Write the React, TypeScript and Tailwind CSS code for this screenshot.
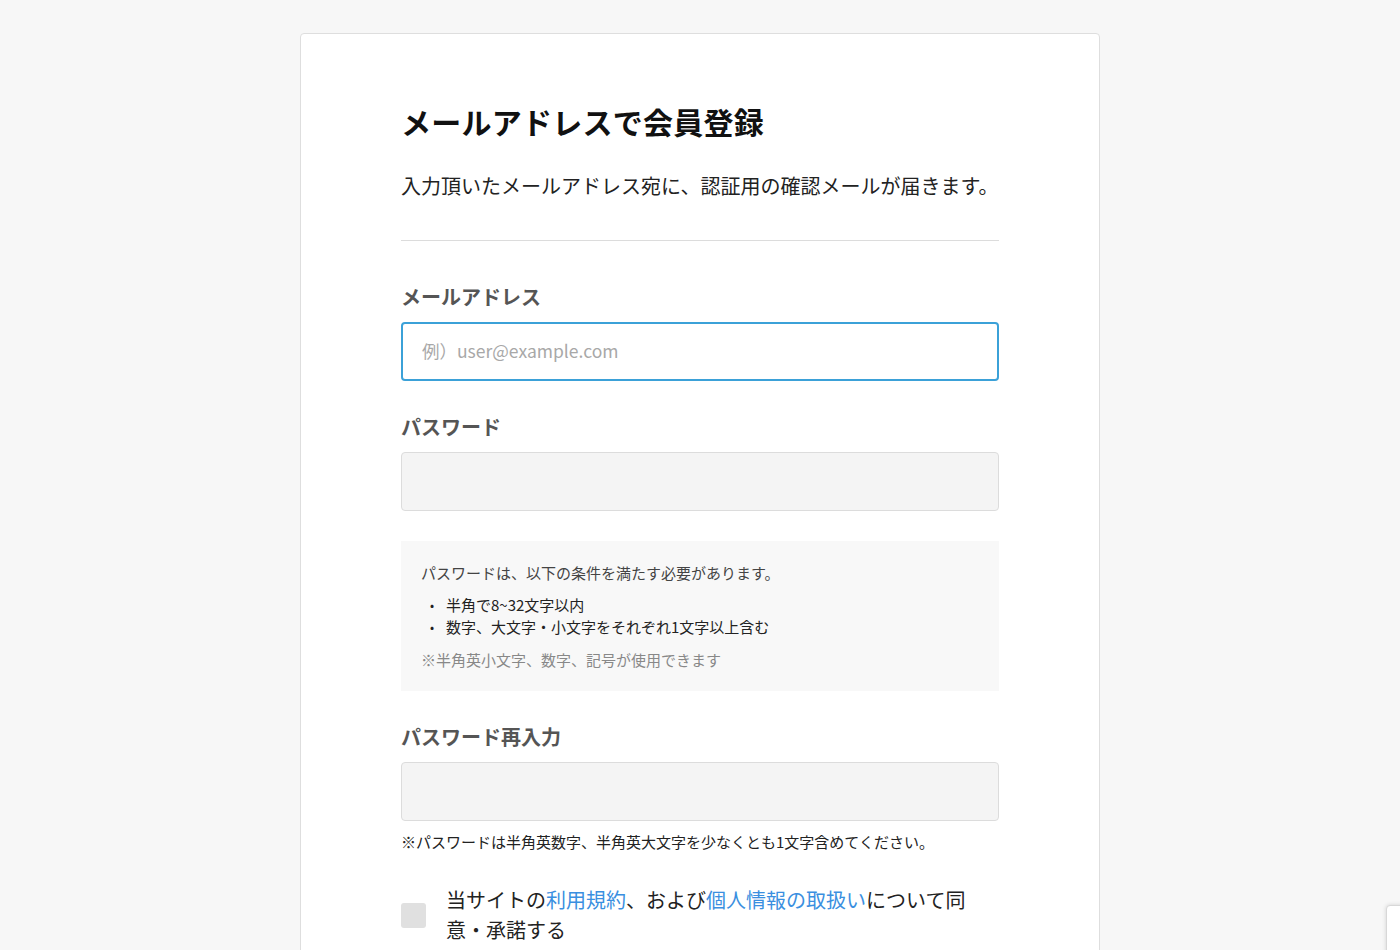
import React from 'react';

const font = { fontFamily: '"Noto Sans CJK JP", "Noto Sans", sans-serif' };

function Field({ label, children }: { label: string; children: React.ReactNode }) {
  return (
    <div>
      <div className="text-[20px] font-bold text-[#555] leading-none">{label}</div>
      <div className="mt-[15px]">{children}</div>
    </div>
  );
}

export default function App() {
  return (
    <div
      className="min-h-screen h-[950px] overflow-hidden bg-[#f7f7f7] flex justify-center pt-[33px] relative"
      style={font}
    >
      <div className="w-[800px] bg-white border border-[#dedede] rounded-[4px] px-[100px] pt-[72px] pb-[60px] self-start">
        <h1 className="text-[30px] font-bold text-[#111] leading-none tracking-[0.25px]">
          メールアドレスで会員登録
        </h1>
        <p className="mt-[40px] text-[20px] text-[#222] leading-none">
          入力頂いたメールアドレス宛に、認証用の確認メールが届きます。
        </p>
        <div className="mt-[44px] border-t border-[#dcdcdc]" />

        <div className="mt-[46px]">
          <Field label="メールアドレス">
            <div className="h-[59px] rounded-[4px] border-2 border-[#3ba1d8] flex items-center px-[19px]">
              <span className="text-[17.5px] text-[#a8a8a8]">例）user@example.com</span>
            </div>
          </Field>
        </div>

        <div className="mt-[36px]">
          <Field label="パスワード">
            <div className="h-[59px] rounded-[4px] border border-[#dcdcdc] bg-[#f4f4f4]" />
          </Field>
        </div>

        <div className="mt-[30px] bg-[#f8f8f8] px-[20px] pt-[24px] pb-[24px]">
          <p className="text-[15px] text-[#444] leading-none">
            パスワードは、以下の条件を満たす必要があります。
          </p>
          <ul className="mt-[14px] text-[15px] text-[#222] leading-[22px]">
            <li className="flex items-center">
              <span className="w-[25px] pl-[9px] text-[12px]">•</span>半角で8~32文字以内
            </li>
            <li className="flex items-center">
              <span className="w-[25px] pl-[9px] text-[12px]">•</span>数字、大文字・小文字をそれぞれ1文字以上含む
            </li>
          </ul>
          <p className="mt-[14px] text-[15px] text-[#888] leading-none">
            ※半角英小文字、数字、記号が使用できます
          </p>
        </div>

        <div className="mt-[36px]">
          <Field label="パスワード再入力">
            <div className="h-[59px] rounded-[4px] border border-[#dcdcdc] bg-[#f4f4f4]" />
          </Field>
        </div>
        <p className="mt-[13px] text-[15px] text-[#222] leading-none">
          ※パスワードは半角英数字、半角英大文字を少なくとも1文字含めてください。
        </p>

        <label className="mt-[36px] flex items-center">
          <span className="w-[25px] h-[25px] rounded-[3px] bg-[#e0e0e0] shrink-0" />
          <span className="ml-[20px] text-[20px] text-[#222] leading-[30px] w-[530px]">
            当サイトの<a className="text-[#3a8fe0]">利用規約</a>、および<a className="text-[#3a8fe0]">個人情報の取扱い</a>について同意・承諾する
          </span>
        </label>
      </div>

      <div className="absolute right-[-20px] top-[905px] w-[34px] h-[80px] bg-white border border-[#d8d8d8] rounded-[4px] shadow-[0_0_4px_rgba(0,0,0,0.15)]" />
    </div>
  );
}
